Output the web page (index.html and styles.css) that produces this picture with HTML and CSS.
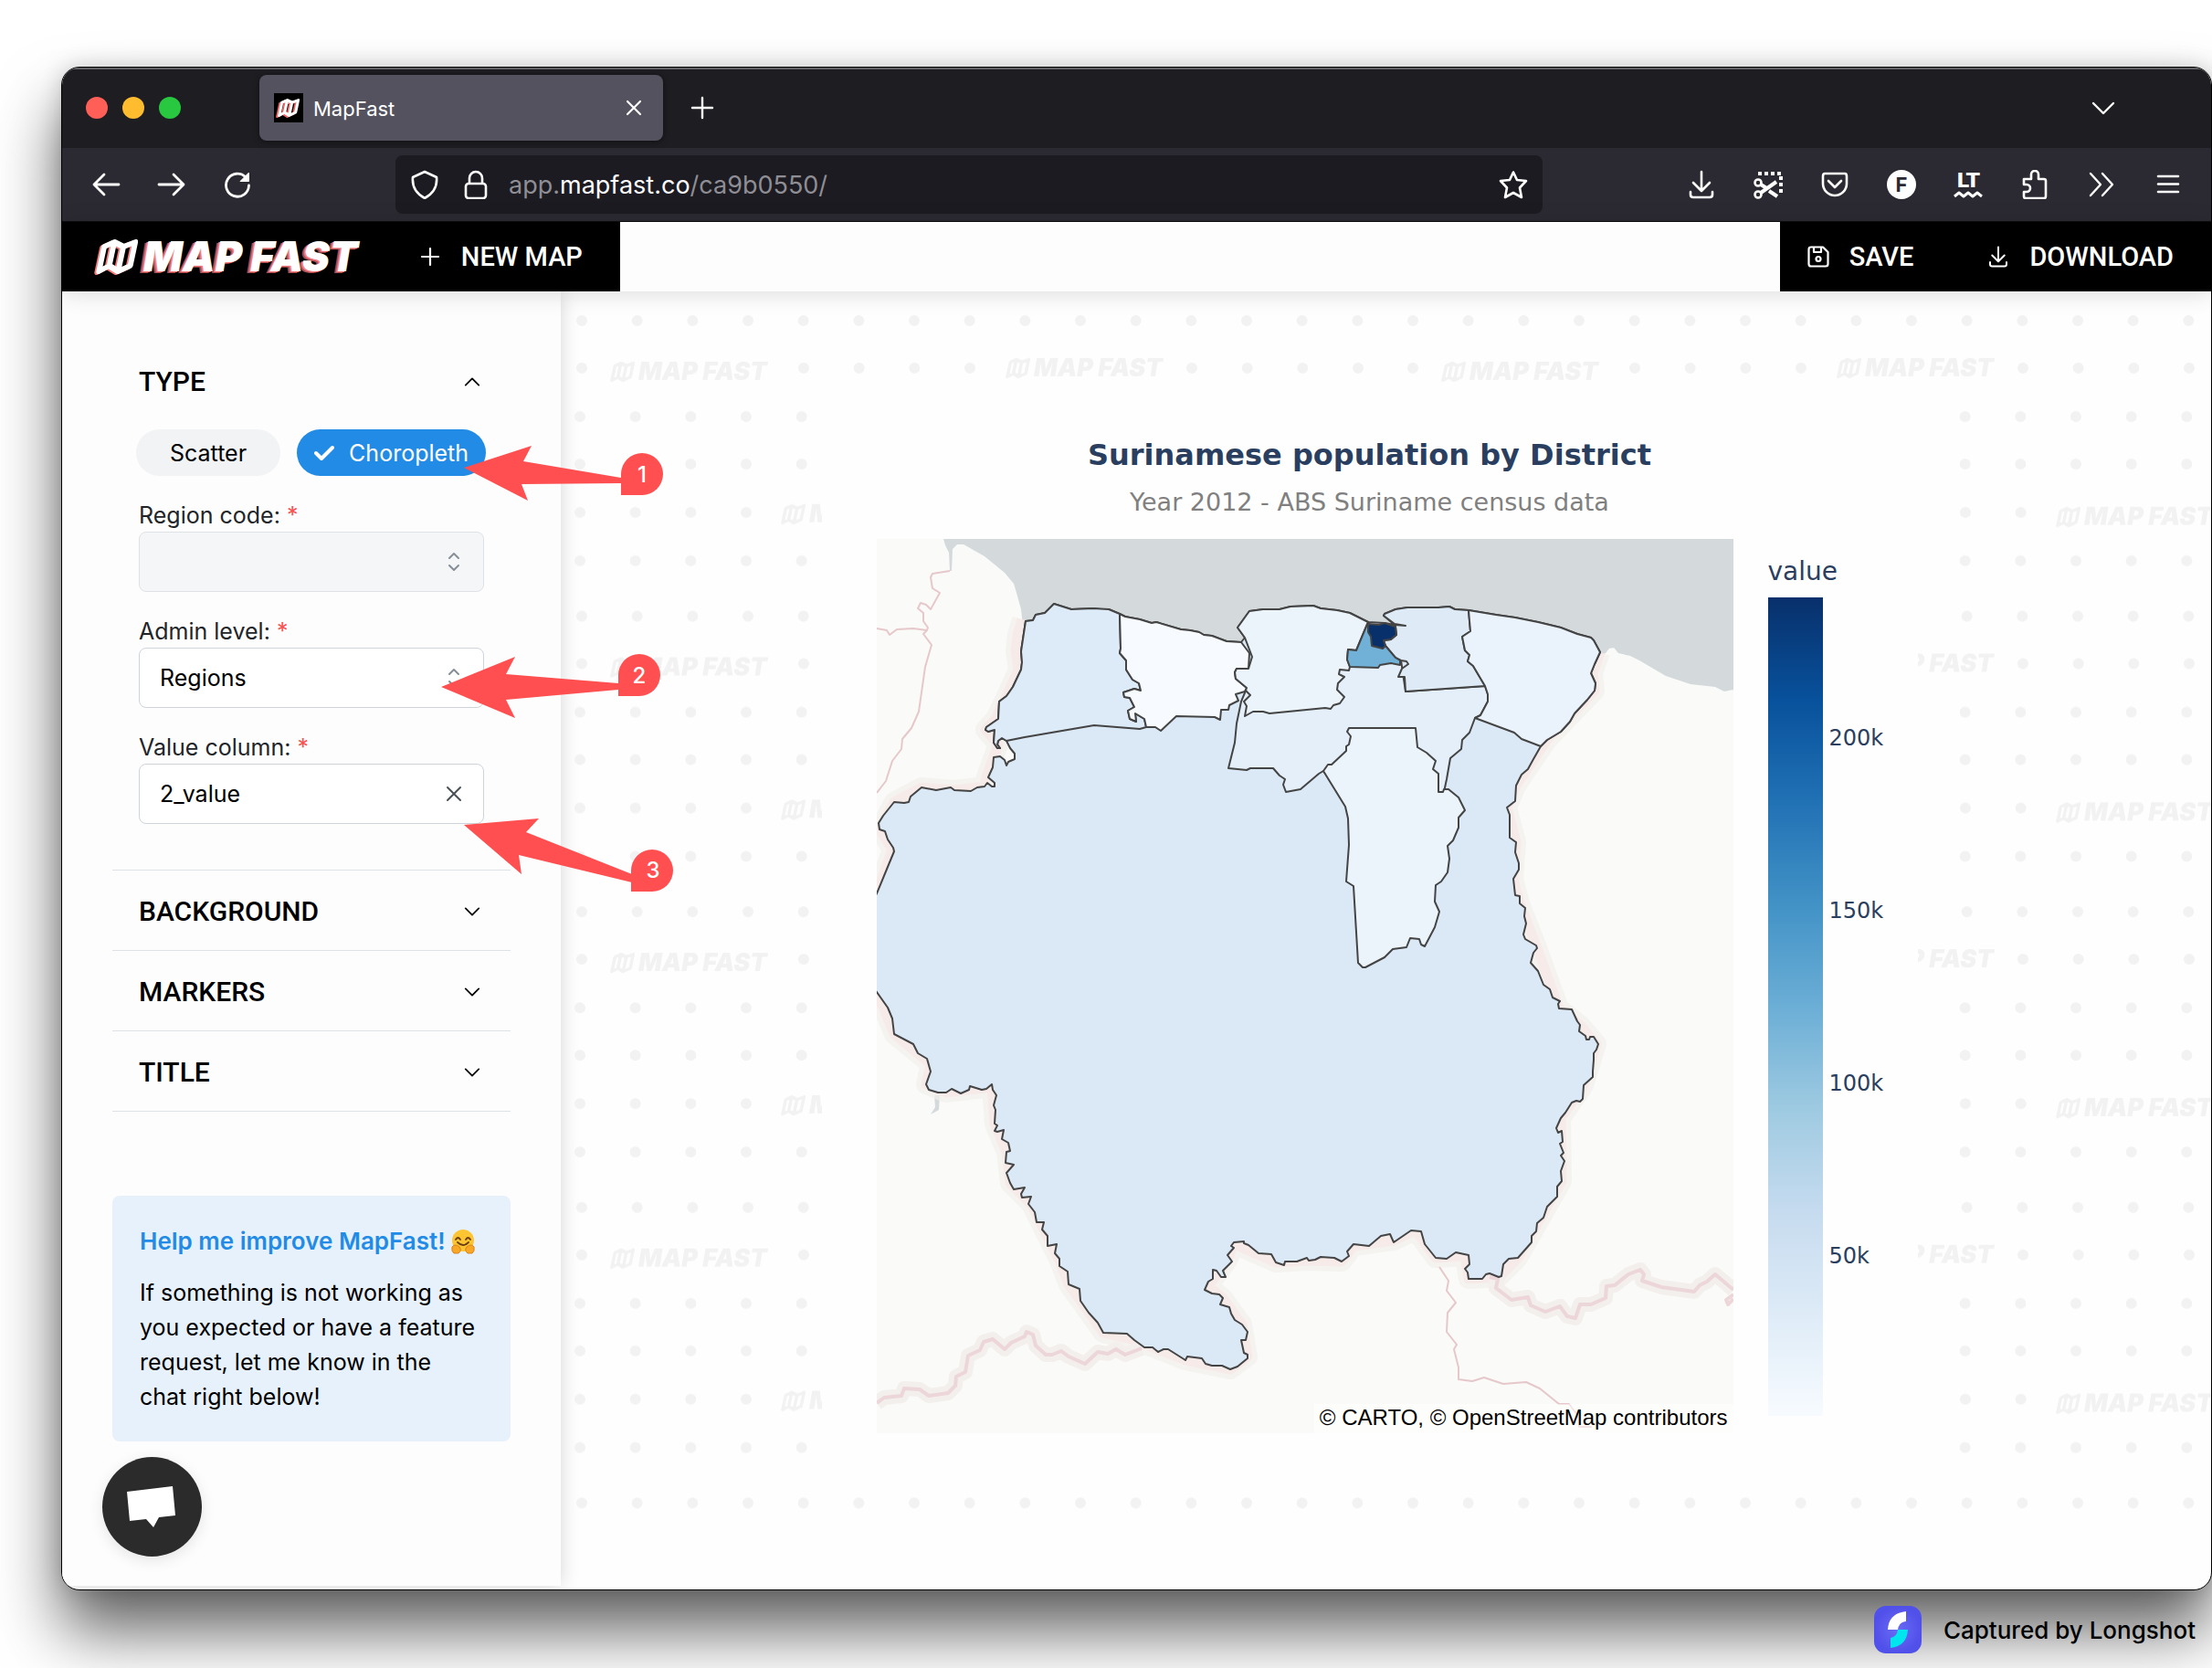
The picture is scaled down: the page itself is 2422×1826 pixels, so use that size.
FILE: index.html
```html
<!DOCTYPE html>
<html lang="en">
<head>
  <meta charset="UTF-8" />
  <meta name="viewport" content="width=device-width, initial-scale=1.0"/>
  <title>MapFast</title>
  <link rel="stylesheet" href="styles.css">
</head>
<body>
  <svg class="defs" aria-hidden="true">
    <symbol id="logo-mark" viewBox="0 0 46 40">
      <path transform="skewX(-12)" d="M11 9 L21 4 L32 9 L44 4 V30 L32 36 L21 30 L11 36 Z M21 4 V30 M32 9 V36" fill="none" stroke="currentColor" stroke-width="6" stroke-linejoin="round"/>
    </symbol>
    <symbol id="chevron" viewBox="0 0 20 20">
      <path d="M2 6 L10 14 L18 6" fill="none" stroke="currentColor" stroke-width="2" stroke-linecap="round" stroke-linejoin="round"/>
    </symbol>
    <symbol id="updown" viewBox="0 0 14 22">
      <path d="M2 7 L7 2 L12 7 M2 15 L7 20 L12 15" fill="none" stroke="currentColor" stroke-width="2" stroke-linecap="round" stroke-linejoin="round"/>
    </symbol>
    <symbol id="tray" viewBox="0 0 32 32">
      <path d="M16 2 V22 M7 14 L16 23 L25 14 M4 24 V27 Q4 30 7 30 H25 Q28 30 28 27 V24" fill="none" stroke="currentColor" stroke-width="2.6" stroke-linecap="round" stroke-linejoin="round"/>
    </symbol>
  </svg>

  <div class="window">
    <div class="tab-bar">
      <div class="lights">
        <span class="light red"></span>
        <span class="light yellow"></span>
        <span class="light green"></span>
      </div>
      <div class="tab">
        <span class="favicon"><svg><use href="#logo-mark"/></svg></span>
        <span class="tab-title">MapFast</span>
        <button class="icon-btn" aria-label="Close tab">
          <svg width="20" height="20" viewBox="0 0 20 20"><path d="M3 3 L17 17 M17 3 L3 17" stroke="#fff" stroke-width="2.2" stroke-linecap="round"/></svg>
        </button>
      </div>
      <button class="icon-btn new-tab" aria-label="New tab">
        <svg width="28" height="28" viewBox="0 0 28 28"><path d="M14 3 V25 M3 14 H25" stroke="#fff" stroke-width="2.4" stroke-linecap="round"/></svg>
      </button>
      <button class="icon-btn all-tabs" aria-label="List all tabs">
        <svg width="32" height="32" viewBox="0 0 32 32"><path d="M5 11 L16 22 L27 11" fill="none" stroke="#fff" stroke-width="2.4" stroke-linecap="round" stroke-linejoin="round"/></svg>
      </button>
    </div>

    <div class="toolbar">
      <div class="nav-buttons">
        <button class="icon-btn" aria-label="Back"><svg width="32" height="32" viewBox="0 0 32 32"><path d="M30 16 H3 M14 5 L3 16 L14 27" fill="none" stroke="#fff" stroke-width="2.8" stroke-linecap="round" stroke-linejoin="round"/></svg></button>
        <button class="icon-btn" aria-label="Forward"><svg width="32" height="32" viewBox="0 0 32 32"><path d="M2 16 H29 M18 5 L29 16 L18 27" fill="none" stroke="#fff" stroke-width="2.8" stroke-linecap="round" stroke-linejoin="round"/></svg></button>
        <button class="icon-btn" aria-label="Reload"><svg width="32" height="32" viewBox="0 0 32 32"><path d="M25 8 A12.500 12.500 0 1 0 28.500 17" fill="none" stroke="#fff" stroke-width="2.800" stroke-linecap="round"/><path d="M28.500 3 V12.500 H19 Z" fill="#fff" stroke="#fff" stroke-linejoin="round"/></svg></button>
      </div>
      <div class="url-bar">
        <svg width="32" height="32" viewBox="0 0 32 32"><path d="M16 2 L29 8 C30 18 25 26 16 31 C7 26 2 18 3 8 Z" fill="none" stroke="#fff" stroke-width="2.6" stroke-linejoin="round"/></svg>
        <svg width="32" height="32" viewBox="0 0 32 32"><path d="M9 15 V9 A7 7 0 0 1 23 9 V15" fill="none" stroke="#fff" stroke-width="2.600"/><rect x="5" y="15" width="22" height="16" rx="3" fill="none" stroke="#fff" stroke-width="2.600"/></svg>
        <span class="url">app.<b>mapfast.co</b>/ca9b0550/</span>
        <button class="icon-btn" aria-label="Bookmark"><svg width="32" height="32" viewBox="0 0 32 32"><path d="M16 2.500 L20 11 L30 12 L23 19.500 L25 30 L16 25 L7 30 L9 19.500 L2 12 L12 11 Z" fill="none" stroke="#fff" stroke-width="2.600" stroke-linejoin="round"/></svg></button>
      </div>
      <div class="extensions">
        <button class="icon-btn" aria-label="Downloads"><svg width="32" height="32"><use href="#tray"/></svg></button>
        <button class="icon-btn" aria-label="Screenshot"><svg width="32" height="32" viewBox="0 0 32 32"><path d="M5 4 H30 V26" fill="none" stroke="#fff" stroke-width="4" stroke-dasharray="4 3"/><circle cx="5" cy="14" r="3.500" fill="none" stroke="#fff" stroke-width="2.600"/><circle cx="5" cy="27" r="3.500" fill="none" stroke="#fff" stroke-width="2.600"/><path d="M8 16 L16 21 M17 23 L26 29 M8 25 L25 13" stroke="#fff" stroke-width="4"/></svg></button>
        <button class="icon-btn" aria-label="Pocket"><svg width="32" height="32" viewBox="0 0 32 32"><path d="M5 4 H27 Q29 4 29 7 V15 A13 13 0 0 1 3 15 V7 Q3 4 5 4 Z M9 12 L16 19 L23 12" fill="none" stroke="#fff" stroke-width="2.600" stroke-linecap="round" stroke-linejoin="round"/></svg></button>
        <button class="icon-btn letter-icon" aria-label="F extension">F</button>
        <button class="icon-btn lt-icon" aria-label="LanguageTool"><span>LT</span><svg width="32" height="8" viewBox="0 0 32 8"><path d="M1 6 L6 2 L11 6 L16 2 L21 6 L26 2 L31 6" fill="none" stroke="#fff" stroke-width="3" stroke-linejoin="round"/></svg></button>
        <button class="icon-btn" aria-label="Extensions"><svg width="32" height="32" viewBox="0 0 32 32"><path d="M4 10 H12 V5 A4 4 0 0 1 20 5 V10 H26 Q28 10 28 12 V29 Q28 31 26 31 H6 Q4 31 4 29 V24 H7 A4 4 0 0 0 7 16 H4 Z" fill="none" stroke="#fff" stroke-width="2.600" stroke-linejoin="round"/></svg></button>
        <button class="icon-btn" aria-label="More tools"><svg width="32" height="32" viewBox="0 0 32 32"><path d="M4 4 L15 16 L4 28 M17 4 L28 16 L17 28" fill="none" stroke="#fff" stroke-width="2.400" stroke-linecap="round" stroke-linejoin="round"/></svg></button>
        <button class="icon-btn" aria-label="Menu"><svg width="32" height="32" viewBox="0 0 32 32"><path d="M5 7 H27 M5 15.500 H27 M5 24 H27" stroke="#fff" stroke-width="2.600" stroke-linecap="round"/></svg></button>
      </div>
    </div>

    <header class="app-header">
      <div class="header-group">
        <a class="logo" href="#"><svg class="logo-mark"><use href="#logo-mark"/></svg><span>MAP FAST</span></a>
        <button class="header-btn new-map">
          <svg width="22" height="22" viewBox="0 0 22 22"><path d="M11 2 V20 M2 11 H20" stroke="#fff" stroke-width="2.200" stroke-linecap="round"/></svg>
          NEW MAP
        </button>
      </div>
      <div class="header-group">
        <button class="header-btn save">
          <svg width="24" height="24" viewBox="0 0 24 24"><path d="M4 1.500 H17 L22.500 7 V20 Q22.500 22.500 20 22.500 H4 Q1.500 22.500 1.500 20 V4 Q1.500 1.500 4 1.500 Z M7 1.500 V7 H15 V1.500" fill="none" stroke="#fff" stroke-width="2.200" stroke-linejoin="round"/><circle cx="12" cy="14.500" r="2.500" fill="none" stroke="#fff" stroke-width="2.200"/></svg>
          SAVE
        </button>
        <button class="header-btn download">
          <svg width="24" height="24"><use href="#tray"/></svg>
          DOWNLOAD
        </button>
      </div>
    </header>

    <div class="workspace">
      <aside class="sidebar">
        <section class="panel">
          <button class="panel-title" aria-expanded="true">TYPE <svg class="chev up"><use href="#chevron"/></svg></button>
          <div class="panel-body">
            <div class="chips">
              <label class="chip"><input type="radio" name="type" value="scatter">Scatter</label>
              <label class="chip checked"><input type="radio" name="type" value="choropleth" checked>
                <svg width="22" height="18" viewBox="0 0 22 18"><path d="M2 9 L8 15 L20 3" fill="none" stroke="#fff" stroke-width="4" stroke-linecap="round" stroke-linejoin="round"/></svg>
                Choropleth</label>
            </div>
            <label class="field-label" for="region">Region code: <span>*</span></label>
            <div class="field">
              <select id="region" disabled><option></option></select>
              <svg class="field-icon updown"><use href="#updown"/></svg>
            </div>
            <label class="field-label" for="admin">Admin level: <span>*</span></label>
            <div class="field">
              <select id="admin"><option>Regions</option></select>
              <svg class="field-icon updown"><use href="#updown"/></svg>
            </div>
            <label class="field-label" for="column">Value column: <span>*</span></label>
            <div class="field">
              <select id="column"><option>2_value</option></select>
              <button class="icon-btn field-icon" aria-label="Clear"><svg width="18" height="18" viewBox="0 0 18 18"><path d="M2 2 L16 16 M16 2 L2 16" stroke="#495057" stroke-width="2" stroke-linecap="round"/></svg></button>
            </div>
          </div>
        </section>
        <section class="panel">
          <button class="panel-title" aria-expanded="false">BACKGROUND <svg class="chev"><use href="#chevron"/></svg></button>
        </section>
        <section class="panel">
          <button class="panel-title" aria-expanded="false">MARKERS <svg class="chev"><use href="#chevron"/></svg></button>
        </section>
        <section class="panel">
          <button class="panel-title" aria-expanded="false">TITLE <svg class="chev"><use href="#chevron"/></svg></button>
        </section>
        <div class="help">
          <h3>Help me improve MapFast!
            <svg class="emoji" viewBox="0 0 26 28"><circle cx="13" cy="13" r="12" fill="#fdc532"/><path d="M5 12 Q7.500 8 10 12 M16 12 Q18.500 8 21 12" fill="none" stroke="#6b3f13" stroke-width="1.800" stroke-linecap="round"/><path d="M7 15 Q13 21 19 15" fill="none" stroke="#6b3f13" stroke-width="1.800" stroke-linecap="round"/><path d="M1 20 Q4 16 9 20 Q12 24 8 27 H3 Q0 25 1 20 Z M25 20 Q22 16 17 20 Q14 24 18 27 H23 Q26 25 25 20 Z" fill="#f9a825" stroke="#d9821b"/></svg>
          </h3>
          <p>If something is not working as you expected or have a feature request, let me know in the chat right below!</p>
        </div>
        <button class="chat" aria-label="Open chat">
          <svg width="58" height="50" viewBox="0 0 58 50"><path d="M1 8 L51 2 L54 34 L36 36 L30 47 L22 38 L4 40 Z" fill="#fff"/></svg>
        </button>
      </aside>

      <main class="canvas">
        <svg class="backdrop" aria-hidden="true">
          <defs>
            <!-- one tile of dots and wordmarks -->
            <pattern id="tile" x="-7" y="7" width="910" height="323.600" patternUnits="userSpaceOnUse">
              <g stroke="#f2f2f2" stroke-width="12" stroke-linecap="round" stroke-dasharray="0 60.667" fill="none">
                <path d="M30 25 H900"/>
                <path d="M30 77 H31 M273 77 H456 M698 77 H900"/>
                <path d="M28 130 H900 M28 182 H900"/>
                <path d="M28 235 H212 M453 235 H697"/>
                <path d="M28 288 H900"/>
              </g>
              <g class="wordmark">
                <use href="#logo-mark" x="61" y="69" width="27" height="24"/><text x="92" y="90">MAP FAST</text>
                <use href="#logo-mark" x="494" y="65" width="27" height="24"/><text x="525" y="86">MAP FAST</text>
                <use href="#logo-mark" x="248" y="225" width="27" height="24"/><text x="279" y="246">MAP FAST</text>
                <use href="#logo-mark" x="734" y="228" width="27" height="24"/><text x="765" y="249">MAP FAST</text>
              </g>
            </pattern>
          </defs>
          <rect width="100%" height="100%" fill="url(#tile)"/>
        </svg>

        <div class="chart">
          <h1>Surinamese population by District</h1>
          <p class="subtitle">Year 2012 - ABS Suriname census data</p>
          <div class="plot">
            <div class="map">
              <svg viewBox="0 0 938 979">
                <defs>
                  <path id="country" d="M-5 398 L0 388 12 359 19 342 18 338 12 329 9 320 3 318 2 311 7 303 19 288 30 289 35 288 37 282 49 272 65 275 81 272 85 275 103 276 110 272 118 271 121 267 126 271 129 271 129 267 122 261 127 250 128 239 135 238 140 242 142 248 144 244 151 241 151 235 146 229 142 221 137 218 133 221 132 225 135 229 132 229 128 223 129 209 122 211 119 209 120 206 133 197 134 178 142 172 149 162 158 143 159 135 158 123 163 90 171 89 174 83 184 81 194 71 213 77 237 76 245 77 254 77 266 82 272 85 288 88 301 92 306 91 333 99 343 100 353 102 358 105 367 106 383 112 399 113 403 108 395 97 408 79 423 77 441 77 453 74 478 73 486 76 504 78 518 81 538 91 556 92 567 94 555 84 556 82 568 77 581 75 615 75 627 74 633 77 648 78 678 83 699 86 724 91 749 97 767 104 782 108 785 111 792 124 786 137 782 147 787 158 786 166 778 176 764 191 759 200 749 211 734 220 727 227 719 241 713 252 706 258 700 270 699 287 690 294 693 302 693 327 700 332 699 343 703 355 703 362 697 372 699 390 704 391 704 399 710 404 709 413 711 421 708 433 710 438 722 445 723 448 719 453 716 464 724 473 730 488 737 493 740 502 748 506 746 509 747 514 761 515 767 528 770 532 769 539 776 544 777 548 780 548 781 545 785 545 790 553 788 559 785 563 785 570 784 583 784 589 774 598 773 613 770 616 766 615 761 617 754 628 749 634 744 645 746 650 750 648 751 660 748 662 752 672 749 675 753 681 749 692 750 703 745 709 745 720 734 731 730 743 723 749 722 758 717 763 717 770 702 787 692 788 686 794 684 807 681 808 671 804 667 805 663 810 648 810 647 803 644 799 649 794 648 784 634 781 624 788 612 787 600 772 596 758 585 757 566 770 562 761 552 763 539 774 522 772 515 780 517 785 509 791 501 787 486 786 480 789 473 790 471 787 460 791 447 791 446 795 437 792 432 783 418 782 407 773 402 771 402 769 391 770 388 774 391 776 384 784 389 791 379 801 382 808 377 808 372 801 368 800 368 810 363 813 359 822 367 826 375 827 379 831 376 838 386 841 388 848 392 855 400 860 406 868 404 877 399 877 402 891 406 893 406 897 395 906 387 909 378 905 367 905 360 903 356 897 340 895 338 899 319 887 314 887 308 890 302 885 293 885 282 877 274 870 248 869 242 858 232 847 223 834 222 821 210 816 209 802 200 796 200 788 195 782 197 772 187 774 187 763 181 756 183 748 175 748 173 737 166 728 169 720 159 721 158 717 162 710 150 712 146 705 142 694 150 685 141 683 142 671 146 670 144 661 137 657 139 647 132 649 129 648 132 642 129 640 130 625 128 620 131 609 127 603 126 597 120 602 115 603 102 599 101 603 92 607 82 602 76 606 67 606 57 603 54 597 59 583 55 569 45 563 40 553 19 542 17 525 12 513 0 496 -5 490 Z"/>
                  <path id="land-border" d="M159 88 L154 105 152 122 155 143 142 172 130 197 119 209 133 225 120 260 118 271 85 275 49 272 19 288 3 318 17 340 0 388 M0 496 L19 542 59 575 54 597 76 606 126 600 129 640 142 671 146 705 169 728 183 756 200 790 210 816 223 834 248 869 282 877 338 899 387 909 406 895 400 860 379 831 363 818 384 790 391 772 437 792 471 790 509 791 522 774 566 768 590 757 612 787 644 785 648 810 681 808 702 787 734 731 750 703 749 634 774 598 788 553 770 532 747 514 722 445 704 399 697 372 700 332 690 294 700 270 734 220 786 166 784 147 792 124"/>
                </defs>
                <rect width="938" height="979" fill="#fafaf8"/>
                <!-- sea -->
                <path d="M73 0 L75 7 79 15 80 35 82 35 83 11 88 6 95 6 118 19 140 37 150 49 153 59 158 77 160 95 400 135 792 128 798 125 802 120 807 119 812 125 825 128 835 133 864 150 891 159 918 162 928 167 938 165 V0 Z" fill="#d4dadc"/>
                <path d="M63 609 H69 L68 625 59 630 64 622 Z" fill="#d4dadc"/>
                <g fill="none" stroke-linejoin="round">
                  <use href="#land-border" stroke="#f2efed" stroke-opacity="0.7" stroke-width="22"/>
                  <use href="#land-border" stroke="#f6e6e5" stroke-opacity="0.6" stroke-width="11"/>
                  <path class="halo" d="M0 946 L8 940 27 938 30 930 47 931 57 938 78 935 86 927 87 917 97 912 100 894 113 888 117 879 127 876 140 887 147 880 162 873 164 868 171 871 174 883 185 893 192 893 202 889 210 895 228 903 242 890 253 892 262 887 272 893 290 886 M671 808 L680 810 678 820 695 833 713 830 716 839 732 846 748 840 756 851 765 853 770 838 782 838 798 831 799 818 808 817 823 805 836 800 840 805 838 812 859 819 895 824 901 817 909 813 918 805 938 822"/>
                  <path class="border" d="M0 946 L8 940 27 938 30 930 47 931 57 938 78 935 86 927 87 917 97 912 100 894 113 888 117 879 127 876 140 887 147 880 162 873 164 868 171 871 174 883 185 893 192 893 202 889 210 895 228 903 242 890 253 892 262 887 272 893 290 886 M671 808 L680 810 678 820 695 833 713 830 716 839 732 846 748 840 756 851 765 853 770 838 782 838 798 831 799 818 808 817 823 805 836 800 840 805 838 812 859 819 895 824 901 817 909 813 918 805 938 822 M938 827 L930 833 932 838 938 832"/>
                  <path d="M80 35 L61 38 59 42 61 54 69 59 59 77 54 72 48 70 45 76 51 81 51 90 56 97 55 100 40 98 22 99 14 105 11 100 0 98 M55 100 L51 104 60 116 53 140 46 189 38 207 28 219 27 230 17 243 10 265 0 278 M616 797 L626 812 624 823 634 836 625 847 624 868 635 882 632 887 637 907 637 920 652 922 665 918 686 925 711 923 726 930 747 947 758 947 768 960 769 972 783 972" stroke="#e6c8cb" stroke-width="2"/>
                </g>
                <g stroke="#444" stroke-width="2" stroke-linejoin="round">
                  <use href="#country" fill="#dbe9f6"/>
                  <!-- Nickerie -->
                  <path fill="#ddeaf7" d="M142 221 L162 217 238 204 288 208 295 206 293 197 283 191 284 200 277 197 275 188 282 184 277 174 271 173 270 168 282 164 289 166 287 158 280 154 273 143 273 133 266 125 267 120 266 82 254 77 237 76 213 77 194 71 184 81 174 83 171 89 163 90 158 123 159 135 158 143 149 162 142 172 134 178 133 197 120 206 119 209 122 211 129 209 128 223 132 229 135 229 132 225 133 221 137 218 Z"/>
                  <!-- Coronie -->
                  <path fill="#f7fbff" d="M266 82 L272 85 288 88 301 92 306 91 333 99 343 100 353 102 358 105 367 106 383 112 399 113 408 125 407 142 394 142 392 146 393 153 405 163 403 167 393 170 396 177 386 182 385 187 377 187 376 198 370 195 328 194 311 210 305 206 295 206 293 197 283 191 284 200 277 197 275 188 282 184 277 174 271 173 270 168 282 164 289 166 287 158 280 154 273 143 273 133 266 125 267 120 Z"/>
                  <!-- Para -->
                  <path fill="#e4eff9" d="M404 166 L399 178 394 202 392 223 385 251 405 253 409 251 434 251 441 259 447 263 445 269 448 277 464 274 484 257 489 254 560 350 615 277 621 277 624 263 628 240 640 230 641 220 649 212 655 196 661 193 669 178 669 170 666 161 579 167 574 133 518 140 480 150 Z"/>
                  <!-- Saramacca -->
                  <path fill="#ebf3fb" d="M408 79 L423 77 441 77 453 74 478 73 486 76 504 78 518 81 538 91 525 122 516 121 515 132 518 140 517 144 507 143 506 148 512 151 505 158 504 165 512 173 507 180 500 182 497 186 491 185 430 191 423 189 412 189 403 194 405 183 402 178 409 171 404 166 405 163 393 153 392 146 394 142 407 142 411 129 403 108 395 97 Z"/>
                  <!-- Brokopondo -->
                  <path fill="#ebf3fb" d="M489 254 L494 247 498 247 514 232 514 227 517 225 519 216 515 211 517 207 590 207 592 228 602 234 612 243 609 252 615 257 615 277 620 277 621 274 626 274 637 283 644 297 637 305 637 316 631 330 625 336 627 350 625 365 618 375 612 379 611 397 616 408 611 425 600 446 596 444 594 438 584 437 580 447 565 449 556 458 535 469 532 469 527 464 522 380 514 375 517 335 516 306 513 293 Z"/>
                  <!-- Commewijne -->
                  <path fill="#deebf7" d="M567 94 L579 95 567 93 555 84 556 82 568 77 581 75 615 75 627 74 633 77 648 78 649 90 650 101 641 107 644 122 649 127 647 134 653 139 666 161 579 167 578 151 571 151 575 142 582 137 580 134 574 133 568 130 557 117 555 111 563 110 569 105 568 96 Z"/>
                  <!-- Marowijne -->
                  <path fill="#eaf2fc" d="M648 78 L678 83 699 86 724 91 749 97 767 104 782 108 785 111 792 124 786 137 782 147 787 158 786 166 778 176 764 191 759 200 749 211 734 220 727 227 706 219 698 212 655 196 661 193 669 178 669 170 666 161 653 139 647 134 649 127 644 122 641 107 650 101 649 90 Z"/>
                  <!-- Wanica -->
                  <path fill="#72b1d7" d="M538 91 L525 122 516 121 515 132 518 140 549 141 551 138 563 136 573 138 573 133 568 130 557 117 Z"/>
                  <!-- Paramaribo -->
                  <path fill="#08306b" d="M538 93 L550 94 556 92 568 96 569 105 563 110 555 111 557 117 554 120 542 117 541 107 538 102 Z"/>
                </g>
              </svg>
              <p class="attribution">© CARTO, © OpenStreetMap contributors</p>
            </div>
            <div class="legend">
              <p class="legend-title">value</p>
              <div class="scale">
                <div class="bar"></div>
                <ul class="ticks">
                  <li>200k</li>
                  <li>150k</li>
                  <li>100k</li>
                  <li>50k</li>
                </ul>
              </div>
            </div>
          </div>
        </div>
      </main>
    </div>

    <svg class="callouts" viewBox="0 0 300 500" width="300" height="500">
      <g fill="#ff4f50">
        <path d="M28 32 L102 8 93 25 200 43 V49 L91 50 98 68 Z"/>
        <path d="M200 62 V39 A23 23 0 1 1 223 62 Z"/>
        <path d="M3 272 L84 239 74 258 197 268 V275 L74 286 84 306 Z"/>
        <path d="M197 282 V259 A23 23 0 1 1 220 282 Z"/>
        <path d="M28 423 L110 416 96 431 212 477 V486 L88 456 91 477 Z"/>
        <path d="M211 496 V473 A23 23 0 1 1 234 496 Z"/>
      </g>
      <g class="callout-num">
        <text x="223" y="48">1</text>
        <text x="220" y="268">2</text>
        <text x="235" y="481">3</text>
      </g>
    </svg>
  </div>

  <footer class="credit">
    <svg width="52" height="52" viewBox="0 0 52 52">
      <defs><radialGradient id="glow"><stop offset="0" stop-color="#6a6af5"/><stop offset="1" stop-color="#5050ea"/></radialGradient></defs>
      <rect width="52" height="52" rx="13" fill="url(#glow)"/>
      <path d="M35 6 V17 Q27 18 26 26 H15 Q16 8 35 6 Z" fill="#fff"/>
      <path d="M26 26 H37 Q36 44 18 46 V35 Q25 34 26 26 Z" fill="#00e5ee"/>
    </svg>
    <span>Captured by Longshot</span>
  </footer>
</body>
</html>
```
FILE: styles.css
```css
* {
  margin: 0;
  padding: 0;
  box-sizing: border-box;
}

body {
  font-family: Inter, "Liberation Sans", sans-serif;
  font-size: 25px;
  color: #000;
  background: #fff;
  padding: 73px 0 0 67px;
  min-height: 100vh;
  overflow: hidden;
}

button {
  font: inherit;
  border: none;
  background: none;
  color: inherit;
  cursor: pointer;
}

.defs {
  display: block;
  width: 0;
  height: 0;
}

.window {
  position: relative;
  border: 1px solid #000;
  border-radius: 20px;
  overflow: clip;
  background: #fefefe;
  box-shadow: 0 44px 70px rgba(0, 0, 0, 0.62), 0 0 24px rgba(0, 0, 0, 0.16);
}

.icon-btn {
  display: flex;
  align-items: center;
  justify-content: center;
}

/* browser tabs */
.tab-bar {
  display: flex;
  align-items: center;
  height: 88px;
  padding: 0 102px 0 26px;
  background: #1e1d22;
  box-shadow: inset 0 2px 0 #626166;
  color: #fff;
}

.lights {
  display: flex;
  gap: 16px;
  width: 190px;
}

.light {
  width: 24px;
  height: 24px;
  border-radius: 50%;
}

.red { background: #ff5f57; }
.yellow { background: #febc2e; }
.green { background: #28c840; }

.tab {
  display: flex;
  align-items: center;
  width: 442px;
  height: 72px;
  padding: 0 22px 0 16px;
  border-radius: 8px;
  background: #53525e;
  box-shadow: 0 1px 6px rgba(0, 0, 0, 0.5);
}

.favicon {
  display: flex;
  align-items: center;
  justify-content: center;
  width: 32px;
  height: 32px;
  background: #000;
}

.favicon svg {
  width: 24px;
  height: 22px;
  filter: drop-shadow(-2px 1px 0 #f06464);
}

.tab-title {
  flex: 1;
  padding: 2px 0 0 11px;
  font-size: 22px;
}

.new-tab {
  margin-left: 29px;
}

.all-tabs {
  margin-left: auto;
}

/* browser toolbar */
.toolbar {
  display: flex;
  align-items: center;
  height: 81px;
  padding: 0 31px 0 32px;
  background: #2b2a33;
  border-bottom: 1px solid #0c0c0d;
  color: #fff;
}

.nav-buttons {
  display: flex;
  gap: 40px;
  width: 333px;
}

.url-bar {
  display: flex;
  align-items: center;
  gap: 24px;
  flex: 1;
  height: 64px;
  padding: 0 16px;
  border-radius: 8px;
  background: #1c1b22;
}

.url {
  flex: 1;
  margin-left: -4px;
  font-size: 27px;
  color: #8f8e94;
}

.url b {
  font-weight: 400;
  color: #fbfbfe;
}

.extensions {
  display: flex;
  gap: 41px;
  margin-left: 158px;
}

.letter-icon {
  width: 32px;
  height: 32px;
  border-radius: 50%;
  background: #fff;
  color: #2b2a33;
  font-size: 22px;
  font-weight: 700;
}

.lt-icon {
  flex-direction: column;
  width: 32px;
  font: 700 22px/22px "DejaVu Sans", sans-serif;
}

/* app header */
.app-header {
  position: relative;
  z-index: 1;
  display: flex;
  justify-content: space-between;
  height: 76px;
  background: #fdfdfd;
  box-shadow: 0 2px 24px rgba(0, 0, 0, 0.14);
}

.header-group {
  display: flex;
  align-items: center;
  background: #000;
  color: #fff;
}

.logo {
  display: flex;
  align-items: center;
  gap: 6px;
  padding: 0 68px 0 37px;
  color: #fff;
  text-decoration: none;
  font-size: 45px;
  font-weight: 900;
  font-style: italic;
  line-height: 76px;
  text-shadow: -2px 1px 0 #f47b7b, -4px 2px 0 #a94b4e;
}

.logo-mark {
  width: 46px;
  height: 40px;
  filter: drop-shadow(-2px 1px 0 #f47b7b);
}

.header-btn {
  display: flex;
  align-items: center;
  gap: 23px;
  font-family: Roboto, sans-serif;
  font-size: 29px;
  font-weight: 500;
}

.new-map { padding-right: 41px; }
.save { padding: 0 40px 0 30px; gap: 22px; }
.download { padding: 0 41px 0 41px; gap: 22px; }

.workspace {
  display: flex;
}

/* sidebar */
.sidebar {
  position: relative;
  width: 546px;
  margin-bottom: 4px;
  padding: 54px 55px 32px;
  background: #fdfdfd;
  box-shadow: 0 0 20px rgba(0, 0, 0, 0.16);
}

.panel {
  border-bottom: 1px solid #dee2e6;
}

.panel-title {
  display: flex;
  align-items: center;
  justify-content: space-between;
  width: 100%;
  height: 87px;
  padding: 2px 33px 0 29px;
  font-family: Roboto, sans-serif;
  font-size: 30px;
  font-weight: 500;
}

.chev {
  width: 18px;
  height: 18px;
}

.chev.up {
  transform: rotate(180deg);
}

.panel-body {
  padding: 10px 29px 50px;
}

.chips {
  display: flex;
  gap: 18px;
  margin: 0 -3px;
}

.chip {
  display: flex;
  align-items: center;
  gap: 16px;
  height: 51px;
  padding: 0 37px;
  border-radius: 26px;
  background: #f1f3f5;
}

.chip.checked {
  padding: 0 19px;
  background: #228be6;
  color: #fff;
}

.chip input {
  position: absolute;
  opacity: 0;
}

.field-label {
  display: block;
  margin-top: 25px;
  line-height: 36px;
  color: #212529;
}

.field-label span {
  color: #fa5252;
}

.field {
  position: relative;
  height: 66px;
}

.field select {
  appearance: none;
  width: 100%;
  height: 100%;
  padding: 0 22px;
  border: 1px solid #ced4da;
  border-radius: 8px;
  background: #fff;
  color: #000;
  font: inherit;
}

.field select:disabled {
  background: #f5f6f8;
  border-color: #dee2e6;
  opacity: 1;
}

.field-icon {
  position: absolute;
  right: 24px;
  top: 24px;
}

.updown {
  top: 22px;
  right: 26px;
  width: 14px;
  height: 22px;
  color: #868e96;
  pointer-events: none;
}

.help {
  margin-top: 92px;
  padding: 31px 30px 30px;
  border-radius: 8px;
  background: #e7f1fb;
  line-height: 38px;
}

.help h3 {
  margin-bottom: 18px;
  font-size: 26px;
  font-weight: 600;
  color: #228be6;
  white-space: nowrap;
}

.emoji {
  width: 26px;
  height: 28px;
  vertical-align: -5px;
}

.chat {
  display: flex;
  align-items: center;
  justify-content: center;
  width: 109px;
  height: 109px;
  margin: 17px 0 0 -11px;
  border-radius: 50%;
  background: #2b2b2b;
  box-shadow: 0 4px 16px rgba(0, 0, 0, 0.1);
}

/* map canvas */
.canvas {
  position: relative;
  flex: 1;
  display: flex;
  justify-content: center;
  align-items: flex-start;
  padding: 106px 36px 0 0;
  overflow: hidden;
}

.backdrop {
  position: absolute;
  top: 0;
  left: 0;
  width: 100%;
  height: 1350px;
}

.wordmark {
  fill: #f2f2f2;
  color: #f2f2f2;
  font-size: 27px;
  font-weight: 900;
  font-style: italic;
}

.chart {
  position: relative;
  width: 1200px;
  padding: 50px 0 55px 60px;
  background: #fefefe;
  font-family: "DejaVu Sans", sans-serif;
  color: #2a3f5f;
}

.chart h1 {
  margin-left: -60px;
  text-align: center;
  font-size: 32px;
  line-height: 46px;
}

.subtitle {
  margin: 11px 0 22px -60px;
  text-align: center;
  font-size: 27px;
  line-height: 36px;
  color: #808080;
}

.plot {
  display: flex;
  gap: 38px;
}

.map {
  position: relative;
  flex: 1;
  overflow: hidden;
}

.map svg {
  display: block;
  width: 100%;
}

.halo {
  stroke: #f3efed;
  stroke-width: 16;
}

.border {
  stroke: #ecd6d9;
  stroke-width: 4;
}

.attribution {
  position: absolute;
  right: 0;
  bottom: 0;
  padding: 0 6px 2px;
  line-height: 30px;
  font-family: "Liberation Sans", sans-serif;
  font-size: 24px;
  color: #000;
  background: rgba(255, 255, 255, 0.5);
}

.legend {
  width: 164px;
  padding-top: 20px;
}

.legend-title {
  margin-bottom: 12px;
  font-size: 28px;
  line-height: 32px;
}

.scale {
  display: flex;
  gap: 7px;
}

.bar {
  width: 60px;
  height: 896px;
  background: linear-gradient(to top, #f7fbff, #deebf7, #c6dbef, #9ecae1, #6baed6, #4292c6, #2171b5, #08519c, #08306b);
}

.ticks {
  display: flex;
  flex-direction: column;
  gap: 161px;
  padding-top: 140px;
  list-style: none;
  font-size: 24px;
  line-height: 28px;
}

/* numbered arrows over the sidebar */
.callouts {
  position: absolute;
  left: 412px;
  top: 406px;
  z-index: 2;
  pointer-events: none;
}

.callout-num {
  fill: #fff;
  font-size: 24px;
  font-weight: 500;
  text-anchor: middle;
}

.credit {
  position: relative;
  display: flex;
  align-items: center;
  justify-content: flex-end;
  gap: 24px;
  padding: 17px 18px 16px 0;
  font-size: 26px;
  font-weight: 500;
}
```
